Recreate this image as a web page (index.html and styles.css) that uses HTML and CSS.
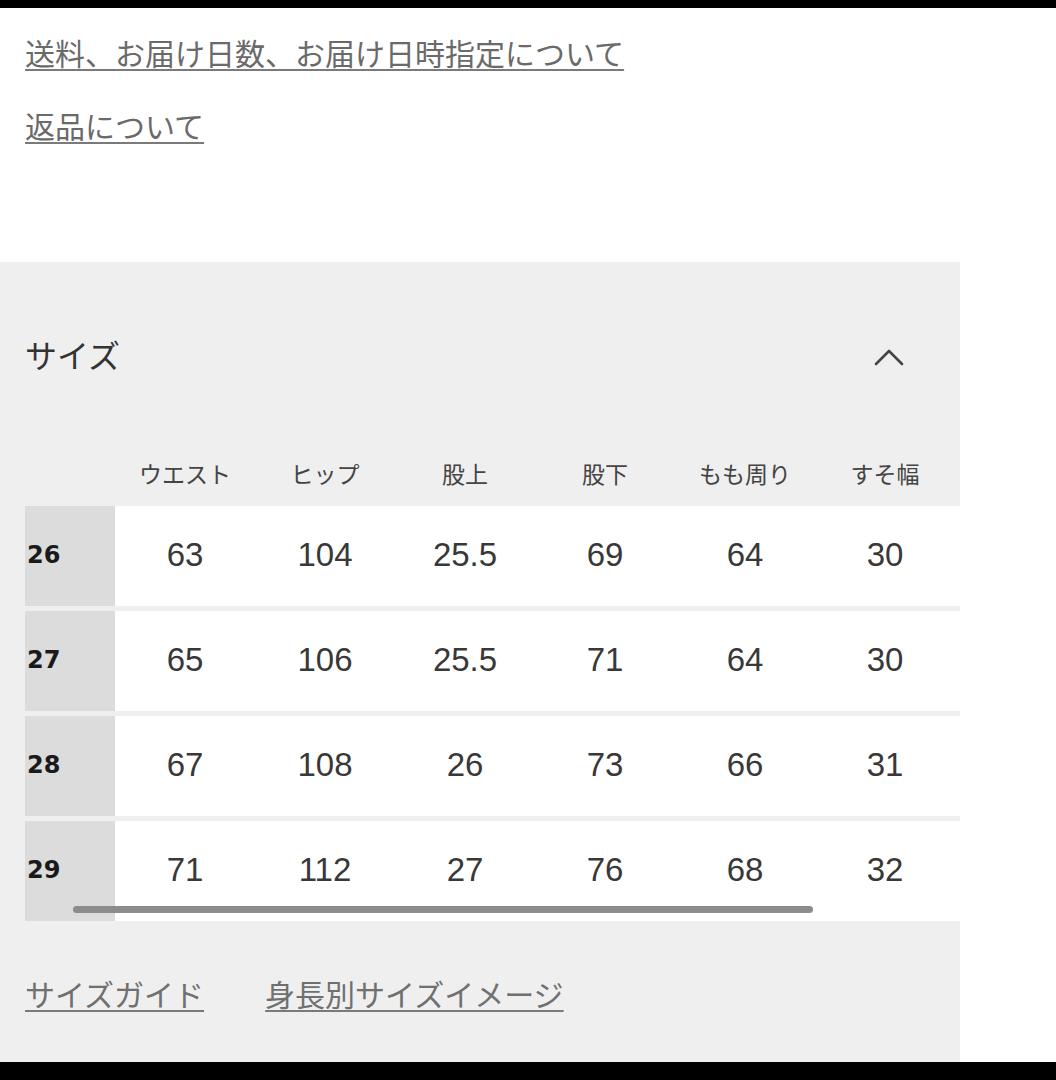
FILE: index.html
```html
<!DOCTYPE html>
<html lang="ja">
<head>
<meta charset="utf-8">
<title>サイズ</title>
<link rel="stylesheet" href="styles.css">
</head>
<body>
<div class="bar bar-top"></div>
<div class="info-links">
  <a class="ulink" href="#">送料、お届け日数、お届け日時指定について</a>
  <a class="ulink" href="#">返品について</a>
</div>
<section class="panel">
  <div class="acc-head">
    <h2 class="acc-title">サイズ</h2>
    <svg class="chev" width="30" height="18" viewBox="0 0 30 18" aria-hidden="true">
      <path d="M2 16 L15 3 L28 16" fill="none" stroke="#444" stroke-width="2.6" stroke-linecap="round" stroke-linejoin="round"/>
    </svg>
  </div>
  <div class="table-wrap">
    <div class="trow thead">
      <div class="cell lab"></div>
      <div class="cell">ウエスト</div>
      <div class="cell">ヒップ</div>
      <div class="cell">股上</div>
      <div class="cell">股下</div>
      <div class="cell">もも周り</div>
      <div class="cell">すそ幅</div>
    </div>
    <div class="tbody">
      <div class="trow">
        <div class="cell lab">26</div>
        <div class="cell">63</div><div class="cell">104</div><div class="cell">25.5</div><div class="cell">69</div><div class="cell">64</div><div class="cell">30</div>
      </div>
      <div class="trow">
        <div class="cell lab">27</div>
        <div class="cell">65</div><div class="cell">106</div><div class="cell">25.5</div><div class="cell">71</div><div class="cell">64</div><div class="cell">30</div>
      </div>
      <div class="trow">
        <div class="cell lab">28</div>
        <div class="cell">67</div><div class="cell">108</div><div class="cell">26</div><div class="cell">73</div><div class="cell">66</div><div class="cell">31</div>
      </div>
      <div class="trow">
        <div class="cell lab">29</div>
        <div class="cell">71</div><div class="cell">112</div><div class="cell">27</div><div class="cell">76</div><div class="cell">68</div><div class="cell">32</div>
      </div>
    </div>
    <div class="scrollthumb"></div>
  </div>
  <div class="guide-links">
    <a class="ulink" href="#">サイズガイド</a>
    <a class="ulink" href="#">身長別サイズイメージ</a>
  </div>
</section>
<div class="bar bar-bottom"></div>
</body>
</html>
```

FILE: styles.css
```css
html, body {
  margin: 0;
  padding: 0;
  background: #ffffff;
  font-family: "Noto Sans CJK JP", "Noto Sans", sans-serif;
  color: #333;
  width: 1056px;
  height: 1080px;
  overflow: hidden;
}

.bar {
  background: #000;
  width: 1056px;
}
.bar-top { height: 8px; }
.bar-bottom { height: 18px; }

.ulink {
  display: block;
  font-size: 30px;
  line-height: 30px;
  color: #6a6a6a;
  text-decoration: underline;
  text-decoration-color: #7a7a7a;
  text-decoration-thickness: 2px;
  text-underline-offset: 4px;
  white-space: nowrap;
}

.info-links {
  display: flex;
  flex-direction: column;
  align-items: flex-start;
  gap: 43px;
  padding: 29px 0 0 25px;
  box-sizing: border-box;
  height: 254px;
}

.panel {
  width: 960px;
  background: #efefef;
  padding-top: 62px;
  height: 800px;
  box-sizing: border-box;
}

.acc-head {
  display: flex;
  align-items: center;
  justify-content: space-between;
  height: 60px;
  padding: 0 56px 0 25px;
}
.acc-title {
  margin: 0;
  font-size: 32px;
  font-weight: 400;
  line-height: 60px;
  color: #333;
}
.chev { margin-top: 6px; }

.table-wrap {
  position: relative;
  margin: 60px 0 0 25px;
  width: 935px;
}

.trow {
  display: grid;
  grid-template-columns: 90px repeat(5, 140px) 1fr;
  align-items: stretch;
}

.thead {
  height: 62px;
}
.thead .cell {
  display: flex;
  align-items: center;
  justify-content: center;
  font-size: 23px;
  color: #444;
  padding-bottom: 4px;
}
.thead .cell:last-child {
  padding-right: 5px;
}

.tbody {
  display: flex;
  flex-direction: column;
  gap: 5px;
}
.tbody .trow {
  height: 100px;
  background: #ffffff;
}
.tbody .cell {
  display: flex;
  align-items: center;
  justify-content: center;
  font-family: "Liberation Sans", "Noto Sans CJK JP", sans-serif;
  font-size: 33px;
  color: #383838;
  padding-bottom: 2px;
}
.tbody .cell:last-child {
  padding-right: 5px;
}
.tbody .cell.lab {
  justify-content: flex-start;
  background: #dcdcdc;
  padding-left: 2px;
  font-family: "DejaVu Sans", sans-serif;
  font-weight: 700;
  font-size: 24px;
  color: #1a1a1a;
}

.scrollthumb {
  position: absolute;
  left: 48px;
  top: 462px;
  width: 740px;
  height: 7px;
  border-radius: 4px;
  background: #8c8c8c;
}

.guide-links {
  display: flex;
  gap: 61px;
  padding-left: 25px;
  margin-top: 57px;
}
.guide-links .ulink {
  color: #707070;
}
```
